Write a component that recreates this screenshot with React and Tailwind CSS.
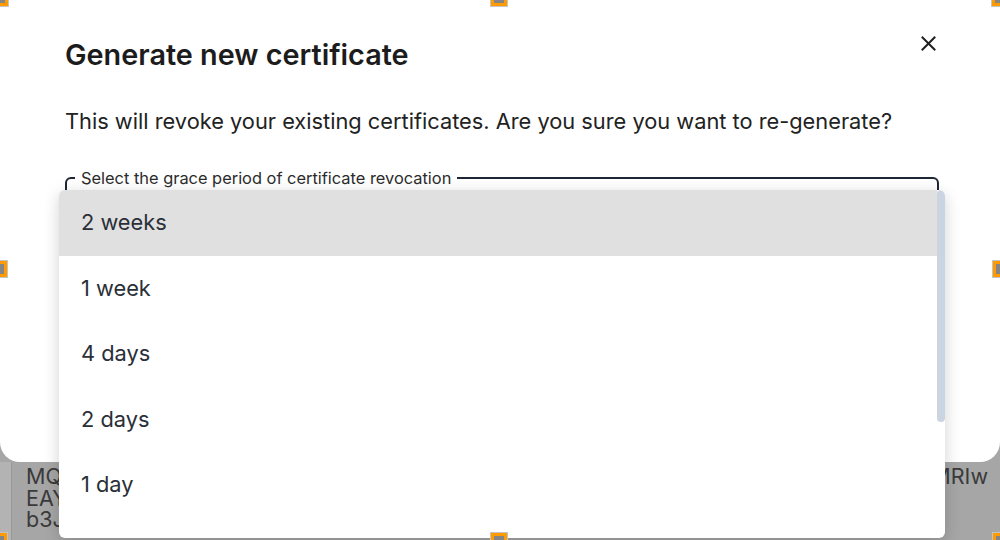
import React from "react";

const items = ["2 weeks", "1 week", "4 days", "2 days", "1 day", "12 hours"];

function Handle({ className }) {
  return (
    <div className={"absolute w-[18px] h-[18px] border border-[#c4c4c4] bg-[#c4c4c4] " + className}>
      <div className="w-full h-full border-[3px] border-[#ff9a00] bg-[#858585]" />
    </div>
  );
}

export default function App() {
  return (
    <div
      className="relative w-[1000px] h-[540px] overflow-hidden bg-[#a6a6a6] flex flex-col"
      style={{ fontFamily: "Inter, 'Noto Sans', sans-serif" }}
    >
      {/* Modal */}
      <div className="relative bg-white rounded-b-[20px] h-[462px] shrink-0 pl-[65px] pr-[61px] pt-[36px]">
        <div className="flex items-start justify-between">
          <h2 className="text-[28.8px] leading-[38px] font-semibold text-[#1c1c1c]">
            Generate new certificate
          </h2>
          <button className="mt-[-3px] mr-[1px] w-[20px] h-[20px] flex items-center justify-center text-[#1f1f1f]">
            <svg width="15" height="15" viewBox="0 0 15 15" fill="none" stroke="currentColor" strokeWidth="2" strokeLinecap="square">
              <path d="M1.5 1.5 L13.5 13.5 M13.5 1.5 L1.5 13.5" />
            </svg>
          </button>
        </div>
        <p className="mt-[31px] text-[21.8px] leading-[32px] text-[#222]">
          This will revoke your existing certificates. Are you sure you want to re-generate?
        </p>
        <fieldset className="mt-[32px] border-2 border-[#1e2533] rounded-[6px] h-[60px] px-[8px]">
          <legend className="px-[6px] text-[16.4px] leading-[18px] text-[#2b2b2b]">
            Select the grace period of certificate revocation
          </legend>
        </fieldset>
      </div>

      {/* Background content under overlay */}
      <div className="flex flex-1 min-h-0">
        <div className="w-[12px] bg-[#b3b3b3] border-r border-[#979797]" />
        <div className="flex-1 pl-[14px] pr-[12px] pt-[4px] text-[21.5px] leading-[21.5px] text-[#3a3a3a] overflow-hidden whitespace-nowrap">
          <div className="flex justify-between">
            <span>MQswCQYDVQQGEwJVUzETMBEGA1UECAwKQ2FsaWZvcm5pYTEWMBQGA1UEBwwN</span>
            <span>MRIw</span>
          </div>
          <div>EAYDVQQKDAlPcmdhbml6YXRpb24xEjAQBgNVBAMMCWxvY2FsaG9zdDAeFw0y</div>
          <div>b3JnYW5pemF0aW9uMRIwEAYDVQQDDAlsb2NhbGhvc3QwggEiMA0GCSqGSIb3</div>
        </div>
      </div>

      {/* Dropdown listbox */}
      <div className="absolute left-[59px] top-[190px] w-[886px] h-[348px] bg-white rounded-[6px] shadow-[0_4px_16px_rgba(0,0,0,0.18)] overflow-hidden flex">
        <ul className="flex-1 flex flex-col">
          {items.map((it, i) => (
            <li
              key={it}
              className={
                "shrink-0 h-[65.5px] flex items-center pl-[22px] text-[21.8px] text-[#2a2f38] " +
                (i === 0 ? "bg-[#e0e0e0]" : "")
              }
            >
              {it}
            </li>
          ))}
        </ul>
        <div className="w-[8px] shrink-0">
          <div className="w-[8px] h-[232px] rounded-full bg-[#cbd5e1]" />
        </div>
      </div>

      {/* Selection handles */}
      <Handle className="left-[-9px] top-[-11px]" />
      <Handle className="left-[490px] top-[-11px]" />
      <Handle className="left-[991px] top-[-11px]" />
      <Handle className="left-[-10px] top-[260px]" />
      <Handle className="left-[992px] top-[260px]" />
      <Handle className="left-[-10px] top-[532px]" />
      <Handle className="left-[490px] top-[532px]" />
      <Handle className="left-[992px] top-[532px]" />
    </div>
  );
}
